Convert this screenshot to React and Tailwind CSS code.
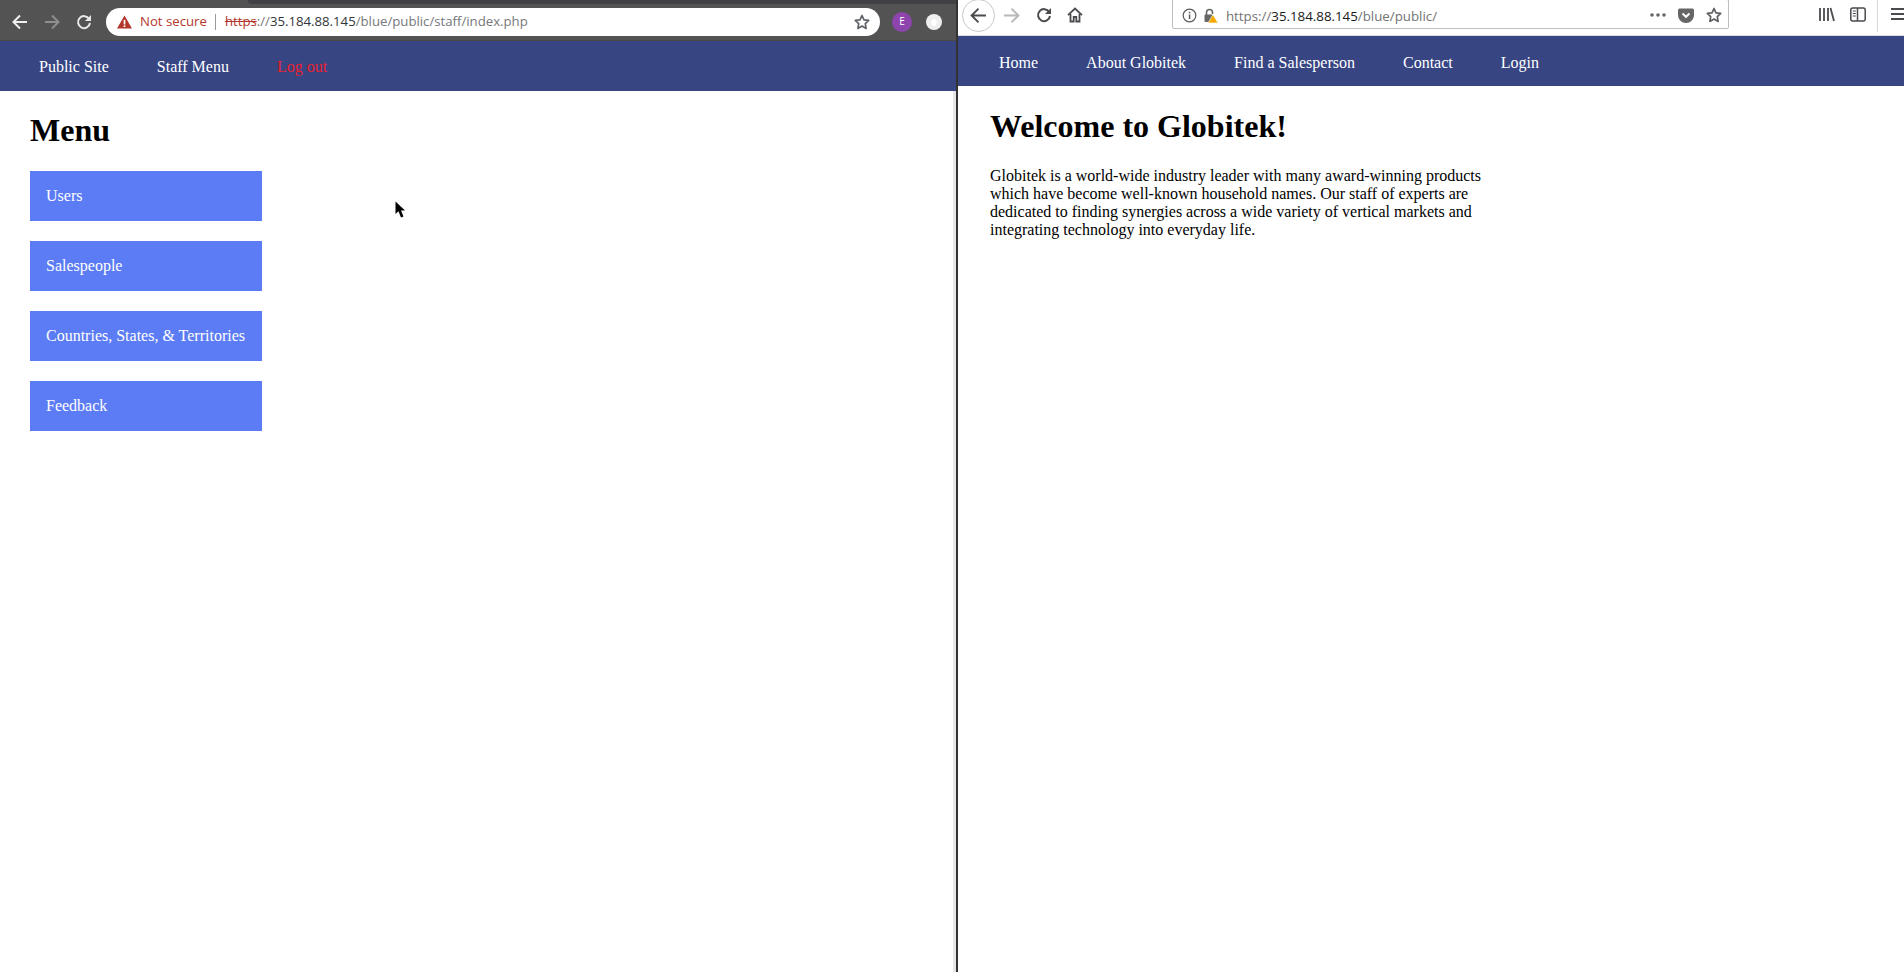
const serif = "font-['Liberation_Serif',serif]";
const ui = "font-['Open_Sans',sans-serif]";

function Arrow({ dir = "left", color, size = 16, width = 2 }) {
  const d = dir === "left" ? "M15 8H1.5M8 1.5L1.5 8L8 14.5" : "M1 8H14.5M8 1.5L14.5 8L8 14.5";
  return (
    <svg width={size} height={size} viewBox="0 0 16 16" fill="none" stroke={color} strokeWidth={width} className="shrink-0">
      <path d={d} />
    </svg>
  );
}

function Reload({ color, size = 16 }) {
  return (
    <svg width={size} height={size} viewBox="0 0 16 16" fill="none" className="shrink-0">
      <path d="M13.2 5A6 6 0 1 0 14 9" stroke={color} strokeWidth="2" />
      <path d="M15 1v6H9z" fill={color} />
    </svg>
  );
}

function Star({ color, size = 16 }) {
  return (
    <svg width={size} height={size} viewBox="0 0 16 16" fill="none" stroke={color} strokeWidth="1.7" strokeLinejoin="round" className="shrink-0">
      <path d="M8 1.5l2 4.3 4.7.6-3.4 3.3.8 4.7L8 12.1l-4.1 2.3.8-4.7L1.3 6.4 6 5.8z" />
    </svg>
  );
}

function ChromeToolbar() {
  return (
    <div className="h-[41px] shrink-0 flex flex-col bg-[#535353]">
      <div className="h-1 shrink-0 flex">
        <div className="w-[248px] bg-[#535353]" />
        <div className="flex-1 bg-[#3f4144] rounded-bl-[6px]" />
      </div>
      <div className="flex-1 flex items-center pb-[1px] border-b border-b-[#4a4a4a]">
        <div className="ml-[12px]"><Arrow color="#f0f0f0" /></div>
        <div className="ml-[16px]"><Arrow dir="right" color="#8f8f8f" /></div>
        <div className="ml-[16px]"><Reload color="#e8e8e8" /></div>
        <div className="ml-[14px] w-[774px] h-[28px] bg-white rounded-full flex items-center pl-[11px]">
          <svg width="15" height="14" viewBox="0 0 14 13" className="shrink-0">
            <path d="M7 0.5L14 12.5H0z" fill="#b3362c" />
            <rect x="6.2" y="4.5" width="1.6" height="4.3" fill="#fff" />
            <rect x="6.2" y="9.6" width="1.6" height="1.6" fill="#fff" />
          </svg>
          <span className={`${ui} ml-[8px] mt-[1px] text-[13.2px] text-[#b3362c] whitespace-nowrap`}>Not secure</span>
          <div className="ml-[8px] w-px h-[16px] bg-[#9a9a9a]" />
          <span className={`${ui} ml-[9px] mt-[1px] text-[13.2px] text-[#75787c] whitespace-nowrap`}>
            <span className="text-[#b3362c] line-through">https</span>://<span className="text-[#33373b]">35.184.88.145</span>/blue/public/staff/index.php
          </span>
          <div className="ml-auto mr-[10px]"><Star color="#5f6368" /></div>
        </div>
        <div className={`${ui} ml-[12px] w-5 h-5 rounded-full bg-[#8e44ad] flex items-center justify-center text-[10px] text-white`}>E</div>
        <div className="ml-[14px] w-4 h-4 rounded-full bg-[#eeeeee] flex items-center justify-center">
          <svg width="10" height="10" viewBox="0 0 10 10"><path d="M5 1.5L9 5.5H7V8.5H3V5.5H1z" fill="#fff" /></svg>
        </div>
      </div>
    </div>
  );
}

function FirefoxToolbar() {
  const c = "#4a4a4f";
  return (
    <div className="h-[36px] shrink-0 flex items-start bg-white border-b border-b-[#dcdce4] overflow-hidden">
      <div className="ml-[4px] -mt-[1px] w-[33px] h-[33px] rounded-full border border-[#c8c8c8] flex items-center justify-center">
        <Arrow color={c} size={17} width={1.8} />
      </div>
      <div className="ml-[8px] mt-[7px]"><Arrow dir="right" color="#b8b8b8" size={17} width={1.8} /></div>
      <div className="ml-[16px] mt-[7px]"><Reload color={c} /></div>
      <div className="ml-[15px] mt-[7px]">
        <svg width="16" height="16" viewBox="0 0 16 16" className="shrink-0" fill="none" stroke={c} strokeWidth="1.8">
          <path d="M1 8.2L8 1.5l7 6.7" />
          <path d="M3.5 7v7.5h3.2V10h2.6v4.5h3.2V7" />
        </svg>
      </div>
      <div className="ml-[89px] w-[558px] h-[30px] -mt-[1px] border border-[#bdbdbd] rounded-[2px] flex items-center pt-[2px] pl-[9px] pr-[6px]">
        <svg width="15" height="15" viewBox="0 0 15 15" className="shrink-0" fill="none">
          <circle cx="7.5" cy="7.5" r="6.3" stroke="#5a5a5f" strokeWidth="1.2" />
          <rect x="6.8" y="6.5" width="1.5" height="4.6" fill="#5a5a5f" />
          <rect x="6.8" y="3.8" width="1.5" height="1.6" fill="#5a5a5f" />
        </svg>
        <svg width="15" height="15" viewBox="0 0 15 15" className="shrink-0 ml-[6px]" fill="none">
          <path d="M3.5 7V4.5a3 3 0 0 1 6 0V6" stroke="#666" strokeWidth="1.6" />
          <rect x="1.5" y="6.5" width="8" height="7.5" rx="1" fill="#666" />
          <path d="M10 6.5l5 8.5H5z" fill="#f5a800" stroke="#fff" strokeWidth="0.6" />
        </svg>
        <span className={`${ui} ml-[8px] mt-[4px] text-[13.3px] text-[#737373] whitespace-nowrap`}>
          https://<span className="text-[#1a1a1a]">35.184.88.145</span>/blue/public/
        </span>
        <svg width="16" height="4" viewBox="0 0 16 4" className="shrink-0 ml-auto" fill="#666">
          <circle cx="2" cy="2" r="1.8" /><circle cx="8" cy="2" r="1.8" /><circle cx="14" cy="2" r="1.8" />
        </svg>
        <svg width="16" height="15" viewBox="0 0 16 15" className="shrink-0 ml-[12px]">
          <path d="M1.8 0.5h12.4A1.6 1.6 0 0 1 16 2v5.2a8 7.8 0 0 1-16 0V2A1.6 1.6 0 0 1 1.8.5z" fill="#666" />
          <path d="M4.5 5.5L8 8.8l3.5-3.3" stroke="#fff" strokeWidth="2" fill="none" />
        </svg>
        <div className="ml-[12px]"><Star color="#5f5f63" /></div>
      </div>
      <div className="ml-[90px] mt-[7px]">
        <svg width="16" height="15" viewBox="0 0 16 15" className="shrink-0" fill="none" stroke={c} strokeWidth="1.8">
          <path d="M1 1v13M5 1v13M9 1v13M11.5 1L15 14" />
        </svg>
      </div>
      <div className="ml-[15px] mt-[7px]">
        <svg width="16" height="15" viewBox="0 0 16 15" className="shrink-0" fill="none" stroke={c} strokeWidth="1.5">
          <rect x="0.8" y="1" width="14.4" height="13" rx="2" />
          <path d="M7.5 1v13" />
          <path d="M2.8 4h3M2.8 6.5h3M2.8 9h3" strokeWidth="1.1" />
        </svg>
      </div>
      <div className="ml-[11px] w-px h-[32px] bg-[#d7d7e0]" />
      <div className="ml-[13px] mt-[8px] flex flex-col gap-[3px] w-[13px] shrink-0">
        <div className="h-[2px] bg-[#4a4a4f]" />
        <div className="h-[2px] bg-[#4a4a4f]" />
        <div className="h-[2px] bg-[#4a4a4f]" />
      </div>
    </div>
  );
}

function Nav({ items, pad }) {
  return (
    <nav className={`h-[50px] shrink-0 bg-[#374583] flex items-center gap-[48px] ${pad} ${serif} text-[16px] text-white`}>
      {items.map((t) => (
        <a key={t} className={t === "Log out" ? "text-[#e8212e]" : ""}>{t}</a>
      ))}
    </nav>
  );
}

const menu = ["Users", "Salespeople", "Countries, States, & Territories", "Feedback"];

export default function App() {
  return (
    <div className={`relative w-[1904px] h-[972px] overflow-hidden bg-white flex ${serif} text-black`}>
      <div className="w-[956px] shrink-0 flex flex-col">
        <ChromeToolbar />
        <Nav items={["Public Site", "Staff Menu", "Log out"]} pad="pl-[39px] pt-[2px]" />
        <div className="flex-1 flex">
          <main className="flex-1 pl-[30px]">
            <h1 className="mt-[21px] mb-[22px] text-[32px] leading-[37px] font-bold">Menu</h1>
            <div className="flex flex-col gap-[20px] w-[232px]">
              {menu.map((m) => (
                <a key={m} className="h-[50px] bg-[#5c7cf5] text-white text-[16px] pl-[16px] flex items-center whitespace-nowrap">{m}</a>
              ))}
            </div>
          </main>
          <div className="w-[3px] bg-[#e6e6e6]" />
        </div>
      </div>
      <div className="w-[2px] shrink-0 bg-[#333333]" />
      <div className="flex-1 flex flex-col min-w-0">
        <FirefoxToolbar />
        <Nav items={["Home", "About Globitek", "Find a Salesperson", "Contact", "Login"]} pad="pl-[41px] pt-[4px]" />
        <main className="pl-[32px]">
          <h1 className="mt-[22px] mb-[22px] text-[32px] leading-[37px] font-bold">Welcome to Globitek!</h1>
          <p className="w-[500px] text-[16px] leading-[18px]">
            Globitek is a world-wide industry leader with many award-winning products which have become well-known household names. Our staff of experts are dedicated to finding synergies across a wide variety of vertical markets and integrating technology into everyday life.
          </p>
        </main>
      </div>
      <svg width="12" height="18" viewBox="0 0 12 18" className="absolute left-[395px] top-[201px]">
        <path d="M0.5 0.5V13L3.5 10.2L6 16.5L8.5 15.5L6 9.5H10z" fill="#000" />
      </svg>
    </div>
  );
}
